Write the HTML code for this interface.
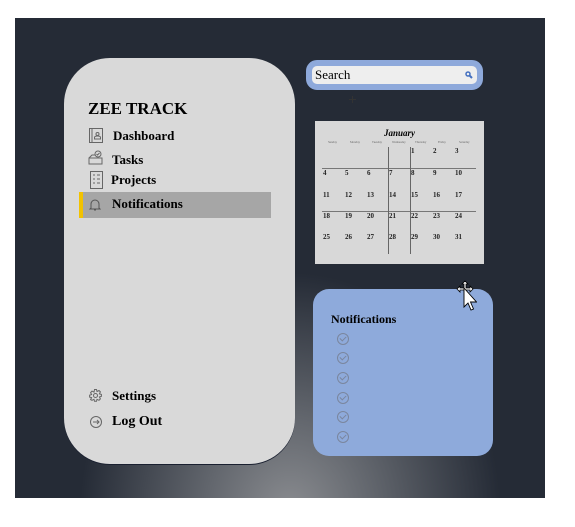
<!DOCTYPE html>
<html><head><style>
body{margin:0;width:575px;height:527px;background:#fff;position:relative;overflow:hidden;font-family:"Liberation Serif",serif;}
.bg{position:absolute;left:15px;top:18px;width:530px;height:480px;background:radial-gradient(ellipse 210px 240px at 275px 495px,#8a8c90 0%,#62666d 40%,#252b36 100%);background-color:#252b36;overflow:hidden}
.side{position:absolute;left:64px;top:58px;width:231px;height:406px;background:#d9d9d9;border-radius:46px;box-shadow:0 1px 0 #1a2030}
.t{position:absolute;font-weight:bold;color:#000;white-space:nowrap}
.search{position:absolute;left:306px;top:60px;width:165px;height:18px;border:6px solid #8ea9db;border-radius:11px;background:#eeeeee}
.cal{position:absolute;left:315px;top:121px;width:169px;height:143px;background:#d8d8d8}
.notif{position:absolute;left:313px;top:289px;width:180px;height:167px;background:#8eaadb;border-radius:16px}
.ck{position:absolute;left:24px;width:10px;height:10px;border:1px solid #7a869e;border-radius:50%}
.ck:after{content:"";position:absolute;left:3px;top:1px;width:3px;height:5px;border:solid #7a869e;border-width:0 1px 1px 0;transform:rotate(45deg)}
.cal span{position:absolute;font-size:7px;color:#222;font-weight:bold}
.cal i{position:absolute;font-size:3px;color:#666;font-style:normal;top:19px}
</style></head><body>
<div class="bg"></div>
<div class="side">
<div class="t" style="left:24px;top:41px;font-size:17px">ZEE TRACK</div>
<svg style="position:absolute;left:25px;top:70px" width="14" height="15" viewBox="0 0 14 15" fill="none" stroke="#666" stroke-width="1"><rect x="0.5" y="0.5" width="13" height="14"/><line x1="3" y1="1" x2="3" y2="14"/><circle cx="8.5" cy="6" r="1.5"/><path d="M5.5 11h6v-1.5c0-1-1-1.5-3-1.5s-3 .5-3 1.5z"/></svg>
<div class="t" style="left:49px;top:70px;font-size:13px">Dashboard</div>
<svg style="position:absolute;left:24px;top:92px" width="15" height="15" viewBox="0 0 15 15" fill="none" stroke="#666"><path d="M1 8h13v6H1z M1 8l3-3h3"/><circle cx="10" cy="4" r="3"/><path d="M8.5 4l1 1 2-2"/></svg>
<div class="t" style="left:48px;top:94px;font-size:13px">Tasks</div>
<svg style="position:absolute;left:26px;top:113px" width="13" height="18" viewBox="0 0 13 18" fill="none" stroke="#666"><rect x="0.5" y="0.5" width="12" height="17"/><path d="M3 4h2M7 4h3M3 8h2M7 8h3M3 12h2M7 12h3"/></svg>
<div class="t" style="left:47px;top:114px;font-size:13px">Projects</div>
<div style="position:absolute;left:15px;top:134px;width:192px;height:26px;background:#a6a6a6"></div>
<div style="position:absolute;left:15px;top:134px;width:4px;height:26px;background:#f2c200"></div>
<svg style="position:absolute;left:25px;top:140px" width="12" height="13" viewBox="0 0 12 13" fill="none" stroke="#555"><path d="M2 10V6a4 4 0 018 0v4l1 1H1z M5 12h2"/></svg>
<div class="t" style="left:48px;top:138px;font-size:13px">Notifications</div>
<svg style="position:absolute;left:25px;top:331px" width="13" height="13" viewBox="0 0 13 13" fill="none" stroke="#666"><circle cx="6.5" cy="6.5" r="2"/><path d="M5.5 .5h2l.5 2 2-1 1.4 1.4-1 2 2 .5v2l-2 .5 1 2-1.4 1.4-2-1-.5 2h-2l-.5-2-2 1L1.6 10.6l1-2-2-.5v-2l2-.5-1-2L3 2.1l2 1z"/></svg>
<div class="t" style="left:48px;top:330px;font-size:13px">Settings</div>
<svg style="position:absolute;left:26px;top:358px" width="12" height="12" viewBox="0 0 12 12" fill="none" stroke="#666"><circle cx="6" cy="6" r="5.5"/><path d="M3 6h6M7 4l2 2-2 2"/></svg>
<div class="t" style="left:48px;top:356px;font-size:14px">Log Out</div>
</div>
<div class="search"><span style="position:absolute;left:3px;top:1px;font-size:13px">Search</span>
<svg style="position:absolute;left:153px;top:5px" width="8" height="8" viewBox="0 0 8 8"><circle cx="3" cy="3" r="2" fill="none" stroke="#4470c0" stroke-width="1.5"/><path d="M4.5 4.5L7 7" stroke="#4470c0" stroke-width="2"/></svg></div>
<div style="position:absolute;left:349px;top:99px;width:7px;height:1px;background:#333"></div>
<div style="position:absolute;left:352px;top:96px;width:1px;height:7px;background:#333"></div>
<div class="cal">
<div style="position:absolute;left:0;width:100%;top:7px;text-align:center;font-style:italic;font-weight:bold;font-size:9px">January</div>
<i style="left:13px">Sunday</i><i style="left:35px">Monday</i><i style="left:57px">Tuesday</i><i style="left:77px">Wednesday</i><i style="left:100px">Thursday</i><i style="left:123px">Friday</i><i style="left:144px">Saturday</i>
<div style="position:absolute;left:7px;right:8px;top:47px;height:1px;background:#777"></div>
<div style="position:absolute;left:7px;right:8px;top:90px;height:1px;background:#777"></div>
<div style="position:absolute;left:73px;top:26px;width:1px;height:107px;background:#666"></div>
<div style="position:absolute;left:95px;top:26px;width:1px;height:107px;background:#666"></div>
<span style="left:96px;top:26px">1</span><span style="left:118px;top:26px">2</span><span style="left:140px;top:26px">3</span>
<span style="left:8px;top:48px">4</span><span style="left:30px;top:48px">5</span><span style="left:52px;top:48px">6</span><span style="left:74px;top:48px">7</span><span style="left:96px;top:48px">8</span><span style="left:118px;top:48px">9</span><span style="left:140px;top:48px">10</span>
<span style="left:8px;top:70px">11</span><span style="left:30px;top:70px">12</span><span style="left:52px;top:70px">13</span><span style="left:74px;top:70px">14</span><span style="left:96px;top:70px">15</span><span style="left:118px;top:70px">16</span><span style="left:140px;top:70px">17</span>
<span style="left:8px;top:91px">18</span><span style="left:30px;top:91px">19</span><span style="left:52px;top:91px">20</span><span style="left:74px;top:91px">21</span><span style="left:96px;top:91px">22</span><span style="left:118px;top:91px">23</span><span style="left:140px;top:91px">24</span>
<span style="left:8px;top:112px">25</span><span style="left:30px;top:112px">26</span><span style="left:52px;top:112px">27</span><span style="left:74px;top:112px">28</span><span style="left:96px;top:112px">29</span><span style="left:118px;top:112px">30</span><span style="left:140px;top:112px">31</span>
</div>
<div class="notif">
<div class="t" style="left:18px;top:23px;font-size:12px">Notifications</div>
<div class="ck" style="top:44px"></div><div class="ck" style="top:63px"></div><div class="ck" style="top:83px"></div><div class="ck" style="top:103px"></div><div class="ck" style="top:122px"></div><div class="ck" style="top:142px"></div>
</div>
<svg style="position:absolute;left:455px;top:280px" width="22" height="32" viewBox="0 0 22 32"><path d="M10 1l3 3h-2v4h4V6l3 3-3 3v-2h-4v2H9v-2H5v2L2 9l3-3v2h4V4H7z" fill="#fff" stroke="#000" stroke-width=".8"/><path d="M9 8v19l4-4 3 7 2.5-1-3-7h6z" fill="#fff" stroke="#000" stroke-width=".9"/></svg>
</body></html>
